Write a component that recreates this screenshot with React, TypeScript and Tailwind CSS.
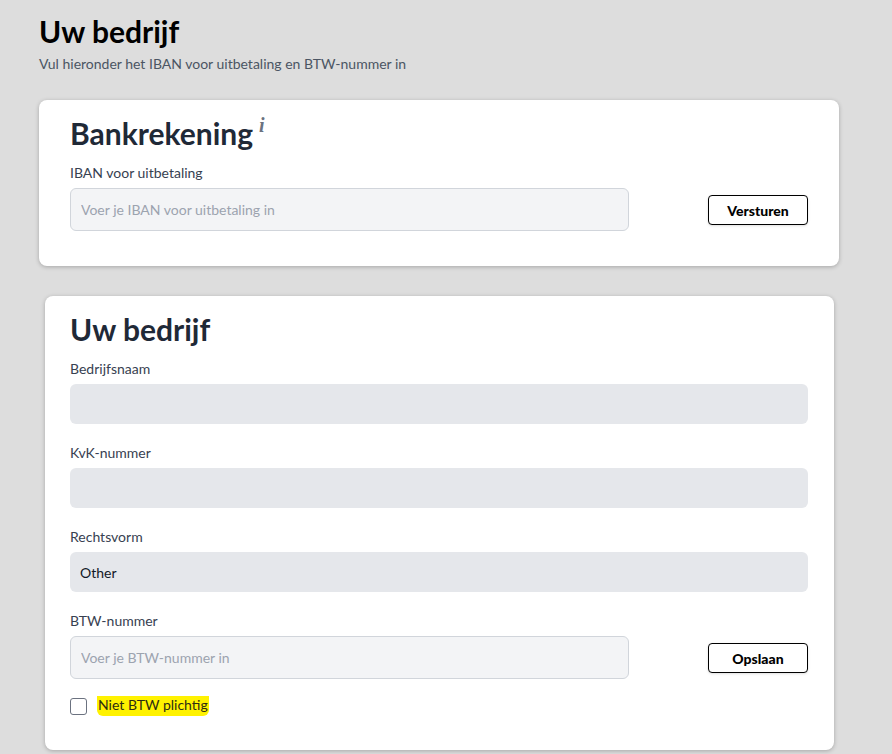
import React from 'react';

const font = { fontFamily: 'Lato, "Noto Sans", sans-serif' };

function Field({ label, children }: { label: string; children: React.ReactNode }) {
  return (
    <div className="flex flex-col">
      <label className="text-[14px] leading-5 text-[#374151]">{label}</label>
      <div className="mt-[5px]">{children}</div>
    </div>
  );
}

function ActionButton({ children }: { children: React.ReactNode }) {
  return (
    <button className="h-[30px] w-[100px] rounded-[4px] border border-black bg-white text-[14px] font-black text-black shadow-sm">
      {children}
    </button>
  );
}

export default function App() {
  return (
    <div style={font} className="min-h-screen bg-[#dddddd] pl-[39px] pt-[13px] pb-4">
      {/* Page header */}
      <h1 className="text-[30px] font-bold leading-9 text-black">Uw bedrijf</h1>
      <p className="mt-[5px] text-[14px] leading-5 text-[#4b5563]">
        Vul hieronder het IBAN voor uitbetaling en BTW-nummer in
      </p>

      {/* Bankrekening card */}
      <section className="mt-[26px] w-[800px] rounded-lg bg-white pl-[31px] pr-[31px] pt-[15px] pb-[35px] shadow-[0_1px_4px_rgba(0,0,0,0.25)]">
        <h2 className="text-[30px] font-bold leading-9 text-[#1f2937]">
          Bankrekening
          <span
            className="ml-[6px] inline-block align-top text-[20px] font-bold italic leading-5 text-[#6b7280]"
            style={{ fontFamily: '"Liberation Serif", serif' }}
          >
            i
          </span>
        </h2>
        <div className="mt-[12px] flex items-end justify-between">
          <div className="w-[559px]">
            <Field label="IBAN voor uitbetaling">
              <input
                placeholder="Voer je IBAN voor uitbetaling in"
                className="h-[43px] w-full rounded-md border border-[#d1d5db] bg-[#f3f4f6] px-[10px] text-[14px] placeholder:text-[#9ca3af] outline-none"
              />
            </Field>
          </div>
          <div className="mb-[6px]">
            <ActionButton>Versturen</ActionButton>
          </div>
        </div>
      </section>

      {/* Uw bedrijf card */}
      <section className="ml-[6px] mt-[30px] w-[789px] rounded-lg bg-white pl-[25px] pr-[26px] pt-[15px] pb-[34px] shadow-[0_1px_4px_rgba(0,0,0,0.25)]">
        <h2 className="text-[30px] font-bold leading-9 text-[#1f2937]">Uw bedrijf</h2>
        <div className="mt-[12px] flex flex-col gap-[19px]">
          <Field label="Bedrijfsnaam">
            <div className="h-[40px] w-full rounded-md bg-[#e5e7eb]" />
          </Field>
          <Field label="KvK-nummer">
            <div className="h-[40px] w-full rounded-md bg-[#e5e7eb]" />
          </Field>
          <Field label="Rechtsvorm">
            <div className="flex h-[40px] w-full items-center rounded-md bg-[#e5e7eb] px-[10px] text-[14px] text-[#111827]">
              Other
            </div>
          </Field>
          <div className="flex items-end justify-between">
            <div className="w-[559px]">
              <Field label="BTW-nummer">
                <input
                  placeholder="Voer je BTW-nummer in"
                  className="h-[43px] w-full rounded-md border border-[#d1d5db] bg-[#f3f4f6] px-[10px] text-[14px] placeholder:text-[#9ca3af] outline-none"
                />
              </Field>
            </div>
            <div className="mb-[6px]">
              <ActionButton>Opslaan</ActionButton>
            </div>
          </div>
        </div>
        <label className="mt-[17px] flex items-center gap-[10px]">
          <span className="h-[17px] w-[17px] rounded-[3px] border border-[#6b7280] bg-white" />
          <span className="rounded-b-[6px] bg-[#fff200] px-[1px] pb-[2px] text-[14px] leading-[18px] text-[#2d2d12]">
            Niet BTW plichtig
          </span>
        </label>
      </section>
    </div>
  );
}
